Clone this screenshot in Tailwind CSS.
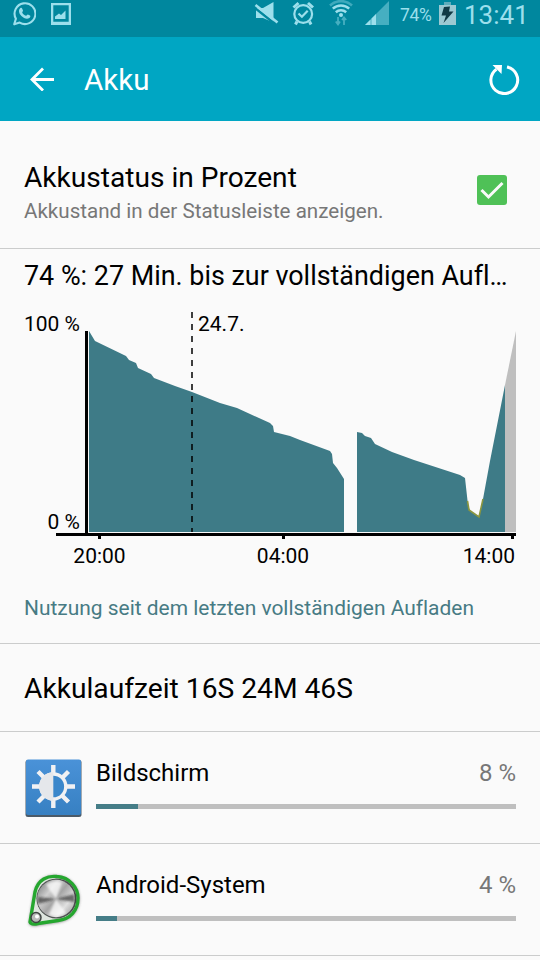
<!DOCTYPE html>
<html lang="de">
<head>
    <meta charset="UTF-8">
    <meta name="viewport" content="width=device-width, initial-scale=1.0">
    <title>Akku</title>
    <script src="https://cdn.jsdelivr.net/npm/@tailwindcss/browser@4"></script>
</head>
<body class="bg-[#fafafa] font-['Roboto','Noto_Sans',sans-serif] text-black [font-variant-ligatures:none]">
    <div class="w-[540px] h-[960px] overflow-hidden flex flex-col whitespace-nowrap">

        <!-- Statusleiste -->
        <div class="h-[37px] shrink-0 bg-[#00879e] flex items-start text-[#9cdfec]">
            <svg class="ml-3 w-6 h-7 shrink-0" viewBox="12 0 24 28" fill="none" stroke="currentColor">
                <path d="M14.2 24.3l1.7-5.6a10.4 10.4 0 1 1 3.8 3.9z" stroke-width="2.1" stroke-linejoin="round"/>
                <path d="M20.2 8.3c.8-.8 1.6-.6 1.9.1l.9 2.1c.2.6-.8 1.4-.8 1.9.8 1.7 2 2.7 3.8 3.4.6.1 1.3-1.5 1.9-1.3l2.1 1c.8.4.2 2-.7 2.6-2.4 1.5-5.6.2-7.9-2.1-2.2-2.2-3.4-5.5-1.2-7.7z" fill="currentColor" stroke="none"/>
            </svg>
            <svg class="ml-[15px] w-5 h-7 shrink-0" viewBox="51 0 20 28" fill="currentColor">
                <path fill-rule="evenodd" d="M51 3h20v22H51zM53.3 5.2v16.5h15.4V5.2z"/>
                <path d="M55 19v-2.5l4-3 2 1.5 4.5-4.5V19z"/>
            </svg>
            <svg class="ml-[183px] w-[26px] h-7 shrink-0" viewBox="254 0 26 28">
                <path d="M256 8h7l10.5-6v20.500L263 18h-7z" fill="currentColor"/>
                <path d="M254 7.300L276 24.800" stroke="#00879e" stroke-width="2.4"/>
                <path d="M255.500 5L277.500 22.500" stroke="currentColor" stroke-width="2.6"/>
            </svg>
            <svg class="ml-3 w-6 h-7 shrink-0" viewBox="291 0 24 28" fill="none" stroke="currentColor">
                <circle cx="302.2" cy="14" r="8.9" stroke-width="2.2"/>
                <path d="M297.5 13.5l3.4 3.2 5.8-6" stroke-width="2.2"/>
                <path d="M292.5 7.5l5-4.5M307 3l5 4.5M296 21.5l-1.500 3M308.500 21.500l1.500 3" stroke-width="3"/>
            </svg>
            <svg class="ml-[13px] w-6 h-7 shrink-0" viewBox="328 0 24 28" fill="none" stroke="currentColor">
                <path d="M329 5.500a16 16 0 0 1 22 0" stroke-width="2.6" opacity=".4"/>
                <path d="M331.800 8.700a12 12 0 0 1 16.400 0M334.800 12.200a8 8 0 0 1 10.400 0" stroke-width="2.5"/>
                <circle cx="340" cy="15" r="2" fill="currentColor" stroke="none"/>
                <path d="M337 25v-8M343 17v8M334.800 21.500l2.200 3 2-3M341 20l2-2.500 2.200 2.500" stroke-width="1.8" opacity=".45"/>
            </svg>
            <svg class="ml-3 w-6 h-7 shrink-0" viewBox="364 0 24 28" fill="currentColor">
                <path d="M364 25L388 1v24z" opacity=".45"/>
                <path d="M364 25l5.500-5.500V25zM370.500 18.500l4.500-4.500v11h-4.500z"/>
            </svg>
            <span class="ml-[11px] w-[38px] text-[17.5px] leading-[30px] tracking-[-0.3px]">74%</span>
            <svg class="ml-px w-[17px] h-7 shrink-0" viewBox="437 0 17 28">
                <path d="M437 5h17v20h-17z" fill="#9cc9d2"/>
                <path d="M442 2h7v3h-7z" fill="#5fadbc"/>
                <path d="M442 7l6-.5-1 5h4.500L441.500 23l2.500-7.500h-4.500z" fill="#123a45"/>
            </svg>
            <span class="ml-2 text-[26px] leading-[30px]">13:41</span>
        </div>

        <!-- App-Leiste -->
        <div class="h-[84px] shrink-0 bg-[#00a6c3] flex items-center text-white">
            <svg class="ml-[30px] w-6 h-6" viewBox="0 0 24 24" fill="none" stroke="currentColor" stroke-width="2.8">
                <path d="M24 12.500H2M13 1.500L2 12.500l11 11"/>
            </svg>
            <h1 class="ml-[30px] pt-[3px] grow text-[29.5px] leading-none font-normal">Akku</h1>
            <svg class="mr-[20px] w-8 h-8" viewBox="488 64 32 32" fill="none" stroke="currentColor">
                <path d="M507 68a13.400 13.400 0 1 1-10.500 2.200" stroke-width="3"/>
                <path d="M492.500 66h9.500l-.5 9z" fill="currentColor" stroke="none"/>
            </svg>
        </div>

        <!-- Akkustatus in Prozent -->
        <div class="h-[128px] shrink-0 border-b border-[#cbcccc] pt-[3px] pl-6 pr-[33px] flex items-center">
            <div class="grow pt-[14px]">
                <div class="text-[28.1px] leading-9">Akkustatus in Prozent</div>
                <div class="text-[20.6px] leading-[30px] text-[#777]">Akkustand in der Statusleiste anzeigen.</div>
            </div>
            <div class="w-[30px] h-[30px] mt-[8px] rounded-[3px] bg-[#4fc157]">
                <svg viewBox="0 0 30 30" fill="none" stroke="#fafafa" stroke-width="3">
                    <path d="M4.500 15l7 7L25.500 8"/>
                </svg>
            </div>
        </div>

        <!-- Akkuverlauf -->
        <div class="h-[395px] shrink-0 border-b border-[#cbcccc] flex flex-col">
            <div class="h-[51px] pl-6 text-[26.9px] leading-[54px]">74 %: 27 Min. bis zur vollständigen Aufl…</div>
            <svg class="w-[540px] h-[280px] shrink-0" viewBox="0 300 540 280" font-size="21">
                <g fill="#3e7b87">
                    <path d="M89 532V331l6 10 31 15 3 4 7 3 2 5 13 6 3 4 21 8 17 6 28 11 17 5 33 15 3 3 1 6 16 4 10 4 30 11 2 3 1 9 4 5 7 11v53z"/>
                    <path d="M357 532V432l5 1 3 3 6 2 4 6 17 8 22 8 46 15 5 3 3 27 2 6 9 6 4-18 7-38 15-76v147z"/>
                </g>
                <path d="M505 532V385l11-54v201z" fill="#bfbfbf"/>
                <path d="M467.500 501l1.500 9 10 7 4-18" fill="none" stroke="#8a963f" stroke-width="1.6"/>
                <path d="M192 312v220" stroke="#000" stroke-width="1.5" stroke-dasharray="6 6"/>
                <path d="M86.500 331v204M56 534.500h460" stroke="#000" stroke-width="3" fill="none"/>
                <path d="M99.500 535v4M283.500 535v4M512.500 535v4" stroke="#000" stroke-width="3"/>
                <text x="80" y="331" text-anchor="end">100 %</text>
                <text x="80" y="529" text-anchor="end">0 %</text>
                <text x="198" y="331">24.7.</text>
                <text x="99.5" y="563" text-anchor="middle">20:00</text>
                <text x="283" y="563" text-anchor="middle">04:00</text>
                <text x="515" y="563" text-anchor="end">14:00</text>
            </svg>
            <div class="pl-6 pt-[13px] text-[20.95px] leading-[30px] text-[#477b84]">Nutzung seit dem letzten vollständigen Aufladen</div>
        </div>

        <div class="h-[88px] shrink-0 border-b border-[#cbcccc] pl-6 text-[28.2px] leading-[90px]">Akkulaufzeit 16S 24M 46S</div>

        <!-- Verbraucher -->
        <div class="h-[112px] shrink-0 border-b border-[#cbcccc] pl-6 pr-6 flex">
            <svg class="mt-[25px] w-[60px] h-[62px] shrink-0" viewBox="24 757 60 62">
                <defs>
                    <linearGradient id="blue" x2="0" y2="1">
                        <stop stop-color="#4a92d8"/>
                        <stop offset="1" stop-color="#3780c2"/>
                    </linearGradient>
                </defs>
                <rect x="25.5" y="760" width="56" height="57" rx="2.5" fill="#4b5a68"/>
                <rect x="26" y="759.5" width="55" height="55.5" rx="2" fill="url(#blue)"/>
                <g stroke="#f1f1f3" stroke-width="4.4">
                    <path d="M53.300 765v9M53.300 799v9M32 786.500h9M66 786.500h9M38 771.500l6 6M62.500 796l6 6M38 802l6-6M62.500 777.500l6-6"/>
                </g>
                <circle cx="53.3" cy="786.5" r="12.5" fill="#3b87cb" stroke="#f1f1f3" stroke-width="3.4"/>
                <path d="M53.300 772.300a14.200 14.200 0 0 0 0 28.400z" fill="#e5e7eb"/>
            </svg>
            <div class="ml-3 w-[420px] pt-[25px]">
                <div class="flex justify-between text-[24px] leading-8">
                    <span>Bildschirm</span>
                    <span class="text-[#777]">8 %</span>
                </div>
                <div class="mt-[15px] h-[5px] bg-[#bfbfbf]">
                    <div class="h-full bg-[#457d87]" style="width: 10%"></div>
                </div>
            </div>
        </div>

        <div class="h-[112px] shrink-0 border-b border-[#cbcccc] pl-6 pr-6 flex">
            <svg class="mt-[25px] w-[60px] h-[62px] shrink-0" viewBox="24 868 60 62">
                <defs>
                    <linearGradient id="metal" x1="0" y1=".1" x2="1" y2=".9">
                        <stop stop-color="#77797a"/>
                        <stop offset=".3" stop-color="#cfcfcf"/>
                        <stop offset=".5" stop-color="#a5a5a5"/>
                        <stop offset=".75" stop-color="#e0e0e0"/>
                        <stop offset="1" stop-color="#999"/>
                    </linearGradient>
                    <filter id="soft" x="-20%" y="-20%" width="140%" height="140%">
                        <feGaussianBlur stdDeviation="1.5"/>
                    </filter>
                    <filter id="blend" x="-20%" y="-20%" width="140%" height="140%">
                        <feGaussianBlur stdDeviation="1"/>
                    </filter>
                </defs>
                <path d="M30 922L35 891C38 878 48 874.500 57 875.500 70 876.500 78 887 78.500 897 78.500 910 70 919 58 920.500L38 923.500Q31 925 30 922z" fill="#555" stroke="#555" stroke-width="2" opacity=".7" filter="url(#soft)"/>
                <path d="M30 921L35 891C38 878 48 874.500 57 875.500 70 876.500 78 887 78 897 78 910 70 918 58 919.500L38 922.500Q31 924 30 921z" fill="#dfe6df" stroke="#25a72f" stroke-width="3.4"/>
                <circle cx="56.5" cy="897.5" r="20" fill="#4a4f4d"/>
                <circle cx="56" cy="897.5" r="18.8" fill="url(#metal)"/>
                <g filter="url(#blend)">
                    <path d="M56 898L46 883.500a17 17 0 0 1 16-2zM56 898l10 14a17 17 0 0 1-17 1.500z" fill="#fff" opacity=".7"/>
                    <path d="M56 898l-18-2v7zM56 898l18.500-5v8z" fill="#222" opacity=".6"/>
                </g>
                <circle cx="36" cy="916.5" r="5" fill="#b9b9b9" stroke="#3f4442" stroke-width="1.5"/>
                <circle cx="37" cy="915.5" r="2" fill="#fff"/>
            </svg>
            <div class="ml-3 w-[420px] pt-[25px]">
                <div class="flex justify-between text-[24px] leading-8">
                    <span>Android-System</span>
                    <span class="text-[#777]">4 %</span>
                </div>
                <div class="mt-[15px] h-[5px] bg-[#bfbfbf]">
                    <div class="h-full bg-[#457d87]" style="width: 5%"></div>
                </div>
            </div>
        </div>
    </div>
</body>
</html>
